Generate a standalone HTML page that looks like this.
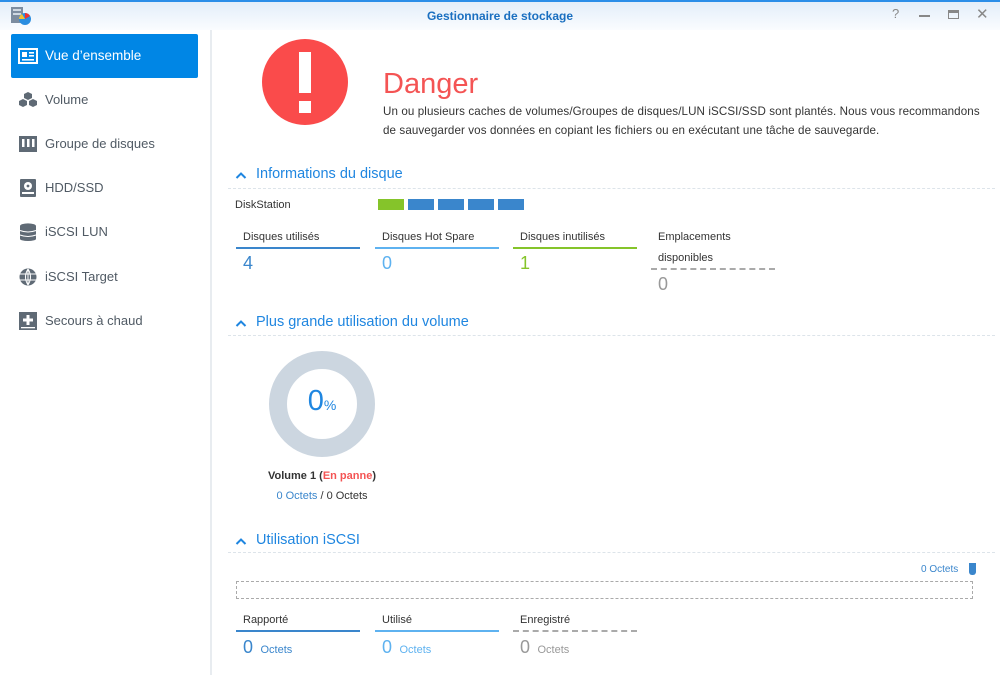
<!DOCTYPE html>
<html><head><meta charset="utf-8"><style>
*{margin:0;padding:0;box-sizing:border-box}
body{width:1000px;height:675px;overflow:hidden;background:#fff;font-family:"Liberation Sans",sans-serif;position:relative;color:#444}
.a{position:absolute;white-space:nowrap}
.title{left:0;top:0;width:1000px;height:30px;border-top:2px solid #2b8ee8;background:linear-gradient(#e3eef9,#fafcff)}
.side{left:0;top:30px;width:212px;height:645px;border-right:2px solid #e8ecf0;background:#fff}
.item{position:absolute;left:11px;width:187px;height:44px;font-size:13px;color:#505a64;line-height:44px;padding-left:34px}
.item svg{position:absolute;left:7px;top:13px}
.sec{font-size:14.5px;color:#1f86e0;padding-left:21px}
.sec svg{position:absolute;left:0;top:5px}
.dl{height:0;border-top:1px dashed #dde4ea;left:228px;width:767px}
.lbl{font-size:11px;color:#333}
.big{font-size:18px}
</style></head><body>
<div class="a title"></div>
<svg class="a" style="left:10px;top:6px" width="22" height="20"><rect x="1" y="1" width="12" height="16" fill="#7d8da0"/><rect x="3" y="3" width="8" height="2" fill="#cfd8e2"/><rect x="3" y="7" width="8" height="2" fill="#cfd8e2"/><circle cx="15" cy="13" r="6" fill="#2a8de0"/><path d="M15 13 L15 7 A6 6 0 0 1 20 10Z" fill="#e33"/><path d="M15 13 L9 13 A6 6 0 0 1 12 8Z" fill="#f5c230"/></svg>
<div class="a" style="left:0;width:1000px;text-align:center;top:9px;font-size:12px;font-weight:bold;color:#1a6fc0">Gestionnaire de stockage</div>
<div class="a" style="left:892px;top:6px;font-size:13px;color:#888">?</div>
<div class="a" style="left:919px;top:15px;width:11px;height:2px;background:#888"></div>
<div class="a" style="left:948px;top:10px;width:11px;height:9px;border:1.5px solid #888;border-top-width:3px"></div>
<div class="a" style="left:976px;top:5px;font-size:15px;color:#888">✕</div>
<div class="a side"></div>
<div class="item" style="top:34px;background:#0086e5;color:#fff;border-radius:2px;font-size:13.5px"><svg width="20" height="18"><rect x="1" y="2" width="18" height="14" fill="none" stroke="#fff" stroke-width="2"/><rect x="4" y="5" width="5" height="5" fill="#fff"/><rect x="11" y="5" width="5" height="1.6" fill="#fff"/><rect x="11" y="8" width="5" height="1.6" fill="#fff"/><rect x="4" y="12" width="12" height="1.6" fill="#fff"/></svg>Vue d’ensemble</div>
<div class="item" style="top:78px"><svg width="20" height="18"><path d="M10 1l4 2v4l-4 2-4-2V3zM5 8l4 2v4l-4 2-4-2v-4zM15 8l4 2v4l-4 2-4-2v-4z" fill="#5f6a75"/></svg>Volume</div>
<div class="item" style="top:122px"><svg width="20" height="18"><rect x="1" y="1" width="18" height="16" fill="#5f6a75"/><rect x="4" y="4" width="2.5" height="8" fill="#fff"/><rect x="9" y="4" width="2.5" height="8" fill="#fff"/><rect x="14" y="4" width="2.5" height="8" fill="#fff"/></svg>Groupe de disques</div>
<div class="item" style="top:166px"><svg width="20" height="18"><rect x="2" y="0" width="16" height="18" rx="1" fill="#5f6a75"/><circle cx="10" cy="7" r="4" fill="#fff"/><circle cx="10" cy="7" r="1.4" fill="#5f6a75"/><rect x="4" y="13" width="12" height="2" fill="#fff"/></svg>HDD/SSD</div>
<div class="item" style="top:210px"><svg width="20" height="18"><ellipse cx="10" cy="3" rx="8" ry="2.6" fill="#5f6a75"/><rect x="2" y="3" width="16" height="13" fill="#5f6a75"/><ellipse cx="10" cy="16" rx="8" ry="2" fill="#5f6a75"/><path d="M2 7.5q8 3 16 0M2 12q8 3 16 0" stroke="#fff" fill="none"/></svg>iSCSI LUN</div>
<div class="item" style="top:255px"><svg width="20" height="18"><circle cx="10" cy="9" r="8.5" fill="#5f6a75"/><path d="M2 6h16M2 12h16M10 1v16M10 1q-5 8 0 16M10 1q5 8 0 16" stroke="#fff" stroke-width="1" fill="none"/></svg>iSCSI Target</div>
<div class="item" style="top:299px"><svg width="20" height="18"><rect x="1" y="0" width="18" height="18" fill="#5f6a75"/><rect x="8.5" y="3" width="3" height="10" fill="#fff"/><rect x="5" y="6.5" width="10" height="3" fill="#fff"/><rect x="3" y="15" width="14" height="1.3" fill="#fff"/></svg>Secours à chaud</div>

<svg class="a" style="left:262px;top:39px" width="86" height="86"><circle cx="43" cy="43" r="43" fill="#fa4b4b"/><rect x="37" y="13" width="12" height="41" fill="#fff"/><rect x="37" y="62" width="12" height="12" fill="#fff"/></svg>
<div class="a" style="left:383px;top:68px;font-size:29px;color:#f45454">Danger</div>
<div class="a" style="left:383px;top:102px;font-size:11.6px;color:#333;line-height:19px;letter-spacing:0.1px">Un ou plusieurs caches de volumes/Groupes de disques/LUN iSCSI/SSD sont plantés. Nous vous recommandons<br>de sauvegarder vos données en copiant les fichiers ou en exécutant une tâche de sauvegarde.</div>

<div class="a sec" style="left:235px;top:166px"><svg width="12" height="8"><path d="M1.5 7L6 2.5 10.5 7" stroke="#1f86e0" stroke-width="2" fill="none"/></svg>Informations du disque</div>
<div class="a dl" style="top:188px"></div>
<div class="a lbl" style="left:235px;top:199px">DiskStation</div>
<div class="a" style="left:378px;top:199px;width:26px;height:11px;background:#85c42a"></div>
<div class="a" style="left:408px;top:199px;width:26px;height:11px;background:#3a86cc"></div>
<div class="a" style="left:438px;top:199px;width:26px;height:11px;background:#3a86cc"></div>
<div class="a" style="left:468px;top:199px;width:26px;height:11px;background:#3a86cc"></div>
<div class="a" style="left:498px;top:199px;width:26px;height:11px;background:#3a86cc"></div>

<div class="a lbl" style="left:243px;top:231px">Disques utilisés</div>
<div class="a" style="left:236px;top:247px;width:124px;border-top:2px solid #3a86cc"></div>
<div class="a big" style="left:243px;top:253px;color:#3a86cc">4</div>
<div class="a lbl" style="left:382px;top:231px">Disques Hot Spare</div>
<div class="a" style="left:375px;top:247px;width:124px;border-top:2px solid #5eb2f0"></div>
<div class="a big" style="left:382px;top:253px;color:#5eb2f0">0</div>
<div class="a lbl" style="left:520px;top:231px">Disques inutilisés</div>
<div class="a" style="left:513px;top:247px;width:124px;border-top:2px solid #85c42a"></div>
<div class="a big" style="left:520px;top:253px;color:#85c42a">1</div>
<div class="a lbl" style="left:658px;top:227px;line-height:21px">Emplacements<br>disponibles</div>
<div class="a" style="left:651px;top:268px;width:124px;border-top:2px dashed #aaa"></div>
<div class="a big" style="left:658px;top:274px;color:#999">0</div>

<div class="a sec" style="left:235px;top:314px"><svg width="12" height="8"><path d="M1.5 7L6 2.5 10.5 7" stroke="#1f86e0" stroke-width="2" fill="none"/></svg>Plus grande utilisation du volume</div>
<div class="a dl" style="top:335px"></div>
<svg class="a" style="left:269px;top:351px" width="106" height="106"><circle cx="53" cy="53" r="44" fill="none" stroke="#ccd6e0" stroke-width="18"/></svg>
<div class="a" style="left:269px;top:385px;width:106px;text-align:center;color:#1f86e0"><span style="font-size:29px">0</span><span style="font-size:14px">%</span></div>
<div class="a" style="left:222px;width:200px;text-align:center;top:470px;font-size:11px;font-weight:bold;color:#333">Volume 1 (<span style="color:#f45454">En panne</span>)</div>
<div class="a" style="left:222px;width:200px;text-align:center;top:490px;font-size:11px;color:#333"><span style="color:#3a86cc">0 Octets</span> / 0 Octets</div>

<div class="a sec" style="left:235px;top:532px"><svg width="12" height="8"><path d="M1.5 7L6 2.5 10.5 7" stroke="#1f86e0" stroke-width="2" fill="none"/></svg>Utilisation iSCSI</div>
<div class="a dl" style="top:552px"></div>
<div class="a" style="left:921px;top:564px;font-size:10px;color:#3a86cc">0 Octets</div>
<div class="a" style="left:969px;top:563px;width:7px;height:12px;background:#3a86cc;border-radius:0 0 3px 3px"></div>
<div class="a" style="left:236px;top:581px;width:737px;height:18px;border:1px dashed #aaa"></div>

<div class="a lbl" style="left:243px;top:614px">Rapporté</div>
<div class="a" style="left:236px;top:630px;width:124px;border-top:2px solid #3a86cc"></div>
<div class="a" style="left:243px;top:637px;color:#3a86cc"><span class="big">0</span> <span style="font-size:11px;margin-left:3px">Octets</span></div>
<div class="a lbl" style="left:382px;top:614px">Utilisé</div>
<div class="a" style="left:375px;top:630px;width:124px;border-top:2px solid #5eb2f0"></div>
<div class="a" style="left:382px;top:637px;color:#5eb2f0"><span class="big">0</span> <span style="font-size:11px;margin-left:3px">Octets</span></div>
<div class="a lbl" style="left:520px;top:614px">Enregistré</div>
<div class="a" style="left:513px;top:630px;width:124px;border-top:2px dashed #aaa"></div>
<div class="a" style="left:520px;top:637px;color:#999"><span class="big">0</span> <span style="font-size:11px;margin-left:3px">Octets</span></div>
</body></html>
